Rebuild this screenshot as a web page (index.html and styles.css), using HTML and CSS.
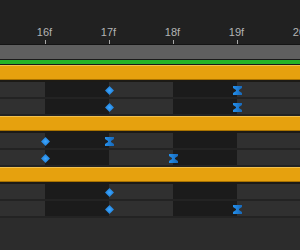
FILE: index.html
```html
<!DOCTYPE html>
<html>
<head>
<meta charset="utf-8">
<link rel="stylesheet" href="styles.css">
</head>
<body>
<div class="timeline">
  <div class="ruler">
    <div class="cell"><span class="label">16f</span><span class="tick"></span></div>
    <div class="cell"><span class="label">17f</span><span class="tick"></span></div>
    <div class="cell"><span class="label">18f</span><span class="tick"></span></div>
    <div class="cell"><span class="label">19f</span><span class="tick"></span></div>
    <div class="cell"><span class="label">20f</span><span class="tick"></span></div>
  </div>
  <div class="scrub"></div>
  <div class="workarea"></div>

  <div class="layer"></div>
  <div class="track">
    <span class="seg lead"></span><span class="seg dark"></span><span class="seg"></span><span class="seg dark"></span><span class="seg rest"></span>
    <svg class="key" style="left:105px" viewBox="0 0 9 9"><use href="#diamond"/></svg>
    <svg class="key" style="left:233px" viewBox="0 0 9 9"><use href="#hour"/></svg>
  </div>
  <div class="track">
    <span class="seg lead"></span><span class="seg dark"></span><span class="seg"></span><span class="seg dark"></span><span class="seg rest"></span>
    <svg class="key" style="left:105px" viewBox="0 0 9 9"><use href="#diamond"/></svg>
    <svg class="key" style="left:233px" viewBox="0 0 9 9"><use href="#hour"/></svg>
  </div>

  <div class="layer"></div>
  <div class="track">
    <span class="seg lead"></span><span class="seg dark"></span><span class="seg"></span><span class="seg dark"></span><span class="seg rest"></span>
    <svg class="key" style="left:41px" viewBox="0 0 9 9"><use href="#diamond"/></svg>
    <svg class="key" style="left:105px" viewBox="0 0 9 9"><use href="#hour"/></svg>
  </div>
  <div class="track">
    <span class="seg lead"></span><span class="seg dark"></span><span class="seg"></span><span class="seg dark"></span><span class="seg rest"></span>
    <svg class="key" style="left:41px" viewBox="0 0 9 9"><use href="#diamond"/></svg>
    <svg class="key" style="left:169px" viewBox="0 0 9 9"><use href="#hour"/></svg>
  </div>

  <div class="layer"></div>
  <div class="track">
    <span class="seg lead"></span><span class="seg dark"></span><span class="seg"></span><span class="seg dark"></span><span class="seg rest"></span>
    <svg class="key" style="left:105px" viewBox="0 0 9 9"><use href="#diamond"/></svg>
  </div>
  <div class="track">
    <span class="seg lead"></span><span class="seg dark"></span><span class="seg"></span><span class="seg dark"></span><span class="seg rest"></span>
    <svg class="key" style="left:105px" viewBox="0 0 9 9"><use href="#diamond"/></svg>
    <svg class="key" style="left:233px" viewBox="0 0 9 9"><use href="#hour"/></svg>
  </div>
  <div class="empty"></div>
</div>

<svg class="defs" width="0" height="0">
  <defs>
    <radialGradient id="dg" cx="0.5" cy="0.5" r="0.6">
      <stop offset="0" stop-color="#3ea6ff"/>
      <stop offset="1" stop-color="#1878d0"/>
    </radialGradient>
    <linearGradient id="hg" x1="0" y1="0" x2="1" y2="0">
      <stop offset="0" stop-color="#2490ec"/>
      <stop offset="1" stop-color="#1868b8"/>
    </linearGradient>
    <polygon id="diamond" points="4.5,0 9,4.5 4.5,9 0,4.5" fill="url(#dg)"/>
    <polygon id="hour" points="0,0 9,0 9,2 6,4 6,5 9,7 9,9 0,9 0,7 3,5 3,4 0,2" fill="url(#hg)"/>
  </defs>
</svg>
</body>
</html>
```
FILE: styles.css
```css
html, body {
  margin: 0;
  padding: 0;
  background: #2c2c2c;
}
.timeline {
  width: 300px;
  height: 250px;
  overflow: hidden;
  background: #2c2c2c;
  font-family: "Liberation Sans", Arial, sans-serif;
}
.ruler {
  height: 44px;
  box-sizing: border-box;
  padding-left: 13px;
  padding-top: 26px;
  background: #212121;
  display: flex;
  overflow: hidden;
}
.cell {
  flex: 0 0 64px;
  display: flex;
  flex-direction: column;
}
.label {
  display: block;
  text-align: center;
  font-size: 11px;
  line-height: 12px;
  height: 12px;
  color: #b4b4b4;
  padding-right: 1px;
}
.tick {
  display: block;
  width: 1px;
  height: 4px;
  margin-top: 2px;
  margin-left: 32px;
  background: #a8a8a8;
}
.scrub {
  height: 14px;
  background: #5f5f5f;
  border-top: 1px solid #141414;
  border-bottom: 1px solid #1a1a1a;
}
.workarea {
  height: 4px;
  background: #26b326;
  border-bottom: 1px solid #1a1a1a;
}
.layer {
  height: 15px;
  box-sizing: content-box;
  background: #e6a10e;
  box-shadow: inset 0 1px 0 #f2c04e, inset 0 -1px 0 #a87200;
  border-bottom: 2px solid #1c1a16;
}
.track {
  position: relative;
  height: 15px;
  display: flex;
  border-bottom: 2px solid #232323;
}
.seg {
  flex: 0 0 64px;
  background: #303030;
}
.seg.lead {
  flex-basis: 45px;
}
.seg.rest {
  flex: 1 1 auto;
}
.seg.dark {
  background: #1b1b1b;
}
.key {
  position: absolute;
  top: 4px;
  width: 9px;
  height: 9px;
}
.empty {
  height: 40px;
  background: #2c2c2c;
}
.defs {
  position: absolute;
}
```
